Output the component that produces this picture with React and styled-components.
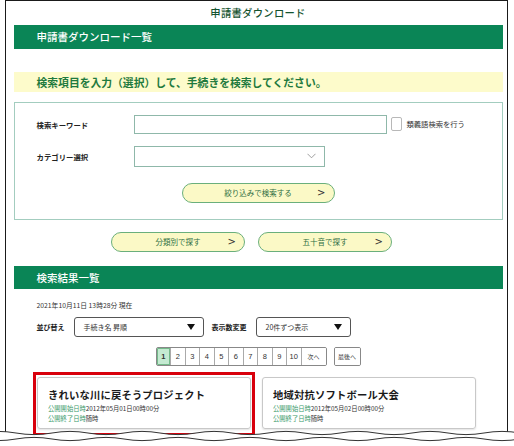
import React from 'react';
import styled, { createGlobalStyle } from 'styled-components';

const GlobalStyle = createGlobalStyle`
  html, body {
    margin: 0;
    padding: 0;
    background: #fff;
  }
  body {
    font-family: "Noto Sans CJK JP", "Noto Sans", sans-serif;
    color: #222;
  }
`;

const Page = styled.div`
  position: relative;
  width: 514px;
  height: 446px;
  overflow: hidden;
`;

const Frame = styled.div`
  margin-left: 5px;
  width: 503px;
  height: 446px;
  border: 1.5px solid #1a1a1a;
  border-bottom: none;
  padding: 0 4.5px 0 7.5px;
  box-sizing: border-box;
`;

const PageTitle = styled.div`
  height: 23.5px;
  display: flex;
  align-items: center;
  justify-content: center;
  font-size: 10.3px;
  font-weight: 500;
  color: #14532f;
  letter-spacing: 0.3px;
`;

const GreenBar = styled.div`
  height: ${({ $h }) => $h}px;
  background: #0a8556;
  color: #fff;
  display: flex;
  align-items: center;
  padding-left: 23px;
  font-size: 10.5px;
  font-weight: 500;
  margin-top: ${({ $mt }) => $mt || 0}px;
`;

const Notice = styled.div`
  margin-top: 23px;
  height: 20px;
  background: #fdfbcb;
  color: #1f7a3e;
  display: flex;
  align-items: center;
  padding-left: 23px;
  font-size: 10.8px;
  font-weight: 700;
`;

const SearchPanel = styled.div`
  margin-top: 10px;
  height: 118px;
  border: 1px solid #a3cdbf;
  box-sizing: border-box;
  padding: 12px 0 0 22px;
  display: flex;
  flex-direction: column;
`;

const FormRow = styled.div`
  display: flex;
  align-items: center;
  margin-bottom: ${({ $mb }) => $mb}px;
`;

const Label = styled.div`
  width: 97px;
  flex-shrink: 0;
  font-size: 7.4px;
  font-weight: 700;
  color: #222;
`;

const TextInput = styled.div`
  width: 253px;
  height: 19px;
  border: 1px solid #8fb8aa;
  box-sizing: border-box;
  background: #fff;
`;

const CheckBox = styled.div`
  width: 9px;
  height: 12px;
  border: 1px solid #b8b8b8;
  border-radius: 2px;
  margin-left: 4px;
  margin-right: 5px;
`;

const SmallText = styled.span`
  font-size: 7.3px;
  color: #333;
`;

const SelectBox = styled.div`
  width: ${({ $w }) => $w}px;
  height: ${({ $h }) => $h}px;
  border: 1px solid ${({ $round }) => ($round ? '#555' : '#8fb8aa')};
  border-radius: ${({ $round }) => ($round ? 3 : 0)}px;
  box-sizing: border-box;
  display: flex;
  align-items: center;
  justify-content: space-between;
  padding: 0 8px 0 9px;
  font-size: 7px;
  color: #333;
`;

const PillButton = styled.div`
  width: ${({ $wide }) => ($wide ? 153 : 134)}px;
  height: 20px;
  box-sizing: border-box;
  border: 1px solid #6aaf7c;
  border-radius: 10px;
  background: #fbf9c6;
  display: flex;
  align-items: center;
  justify-content: center;
  position: relative;
  font-size: 7.5px;
  color: #2d6e42;
`;

const Arrow = styled.span`
  position: absolute;
  right: 8px;
  top: 50%;
  transform: translateY(-52%);
  font-size: 10px;
  color: #333;
  font-family: "DejaVu Sans", sans-serif;
`;

const CenterRow = styled.div`
  display: flex;
  justify-content: center;
  gap: ${({ $gap }) => $gap || 0}px;
  padding-right: ${({ $pr }) => $pr || 0}px;
  margin-top: ${({ $mt }) => $mt || 0}px;
`;

const DateLine = styled.div`
  margin-top: 11px;
  padding-left: 23px;
  font-size: 6.8px;
  color: #333;
`;

const SortRow = styled.div`
  display: flex;
  align-items: center;
  margin-top: 7px;
  padding-left: 23px;
`;

const SortLabel = styled.span`
  font-size: 7px;
  font-weight: 700;
  color: #222;
  margin: 0 ${({ $mr }) => $mr}px 0 ${({ $ml }) => $ml || 0}px;
`;

const Tri = styled.span`
  width: 0;
  height: 0;
  border-left: 4.5px solid transparent;
  border-right: 4.5px solid transparent;
  border-top: 6px solid #111;
`;

const Pager = styled.div`
  display: flex;
  height: 19px;
  border: 1px solid #888;
  border-radius: 2px;
  box-sizing: border-box;
  overflow: hidden;
`;

const PageCell = styled.div`
  width: ${({ $w }) => $w || 14.5}px;
  display: flex;
  align-items: center;
  justify-content: center;
  font-family: "Liberation Sans", "Noto Sans CJK JP", sans-serif;
  font-size: ${({ $small }) => ($small ? 6 : 7.5)}px;
  color: #333;
  font-weight: ${({ $active }) => ($active ? 700 : 400)};
  background: ${({ $active }) => ($active ? '#c4ead1' : '#fff')};
  border-right: 1px solid #aaa;
  box-sizing: border-box;
  ${({ $active }) => $active && 'box-shadow: inset 0 0 0 1px #74b98a;'}
  &:last-child {
    border-right: none;
  }
`;

const Cards = styled.div`
  display: flex;
  gap: 11px;
  margin-top: 11px;
  padding-left: 23.5px;
`;

const Card = styled.div`
  position: relative;
  width: 214px;
  height: 52px;
  border: 1px solid #c8c8c8;
  border-radius: 3px;
  box-shadow: 0 1px 2px rgba(0, 0, 0, 0.12);
  box-sizing: border-box;
  padding: 10px 0 0 10px;

  ${({ $marked }) =>
    $marked &&
    `
    &::after {
      content: '';
      position: absolute;
      left: -5px;
      top: -6px;
      right: -5px;
      bottom: -8px;
      border: 3px solid #d8000c;
    }
  `}
`;

const CardTitle = styled.div`
  font-size: 10.3px;
  font-weight: 700;
  color: #1a1a1a;
  letter-spacing: 0.2px;
  line-height: 14px;
`;

const CardMeta = styled.div`
  font-size: 6.3px;
  line-height: 10px;
  color: #333;
  margin-top: ${({ $mt }) => $mt || 0}px;

  span {
    color: #3b9a6a;
  }
`;

const Torn = styled.svg`
  position: absolute;
  left: 0;
  bottom: 0;
  width: 514px;
  height: 18px;
`;

const pages = ['1', '2', '3', '4', '5', '6', '7', '8', '9', '10'];

const wave = (base, amp, phase) => {
  let d = `M-20 ${base}`;
  let k = phase;
  for (let x = -20; x < 540; x += 36) {
    const up = k % 2 === 0 ? -amp : amp;
    d += ` Q ${x + 18} ${base + up} ${x + 36} ${base}`;
    k += 1;
  }
  return d;
};

export default function App() {
  const upper = wave(5, 3.2, 0);
  const lower = wave(11, 3.2, 1);
  return (
    <Page>
      <GlobalStyle />
      <Frame>
        <PageTitle>申請書ダウンロード</PageTitle>
        <GreenBar $h={24}>申請書ダウンロード一覧</GreenBar>
        <Notice>検索項目を入力（選択）して、手続きを検索してください。</Notice>

        <SearchPanel>
          <FormRow $mb={12}>
            <Label>検索キーワード</Label>
            <TextInput />
            <CheckBox />
            <SmallText>類義語検索を行う</SmallText>
          </FormRow>
          <FormRow $mb={16}>
            <Label>カテゴリー選択</Label>
            <SelectBox $w={191} $h={21}>
              <span />
              <svg width="9" height="6" viewBox="0 0 9 6" fill="none" stroke="#888" strokeWidth="0.8">
                <path d="M0.5 0.8 L4.5 4.8 L8.5 0.8" />
              </svg>
            </SelectBox>
          </FormRow>
          <CenterRow $pr={22}>
            <PillButton $wide>
              絞り込みで検索する
              <Arrow>&gt;</Arrow>
            </PillButton>
          </CenterRow>
        </SearchPanel>

        <CenterRow $gap={13} $pr={13} $mt={12}>
          <PillButton>
            分類別で探す
            <Arrow>&gt;</Arrow>
          </PillButton>
          <PillButton>
            五十音で探す
            <Arrow>&gt;</Arrow>
          </PillButton>
        </CenterRow>

        <GreenBar $h={23} $mt={14}>検索結果一覧</GreenBar>

        <DateLine>2021年10月11日 13時28分 現在</DateLine>

        <SortRow>
          <SortLabel $mr={9}>並び替え</SortLabel>
          <SelectBox $w={130} $h={20} $round>
            手続き名 昇順
            <Tri />
          </SelectBox>
          <SortLabel $mr={9} $ml={8}>表示数変更</SortLabel>
          <SelectBox $w={95} $h={20} $round>
            20件ずつ表示
            <Tri />
          </SelectBox>
        </SortRow>

        <CenterRow $gap={7} $mt={10}>
          <Pager>
            {pages.map((p, i) => (
              <PageCell key={p} $active={i === 0}>{p}</PageCell>
            ))}
            <PageCell $w={24} $small>次へ</PageCell>
          </Pager>
          <Pager>
            <PageCell $w={25} $small>最後へ</PageCell>
          </Pager>
        </CenterRow>

        <Cards>
          <Card $marked>
            <CardTitle>きれいな川に戻そうプロジェクト</CardTitle>
            <CardMeta $mt={2}><span>公開開始日時</span>2012年05月01日00時00分</CardMeta>
            <CardMeta><span>公開終了日時</span>随時</CardMeta>
          </Card>
          <Card>
            <CardTitle>地域対抗ソフトボール大会</CardTitle>
            <CardMeta $mt={2}><span>公開開始日時</span>2012年05月02日00時00分</CardMeta>
            <CardMeta><span>公開終了日時</span>随時</CardMeta>
          </Card>
        </Cards>
      </Frame>

      <Torn viewBox="0 0 514 18" preserveAspectRatio="none">
        <path d={`${upper} L 540 18 L -20 18 Z`} fill="#fff" />
        <path d={upper} fill="none" stroke="#333" strokeWidth="1" />
        <path d={lower} fill="none" stroke="#333" strokeWidth="1" />
      </Torn>
    </Page>
  );
}
